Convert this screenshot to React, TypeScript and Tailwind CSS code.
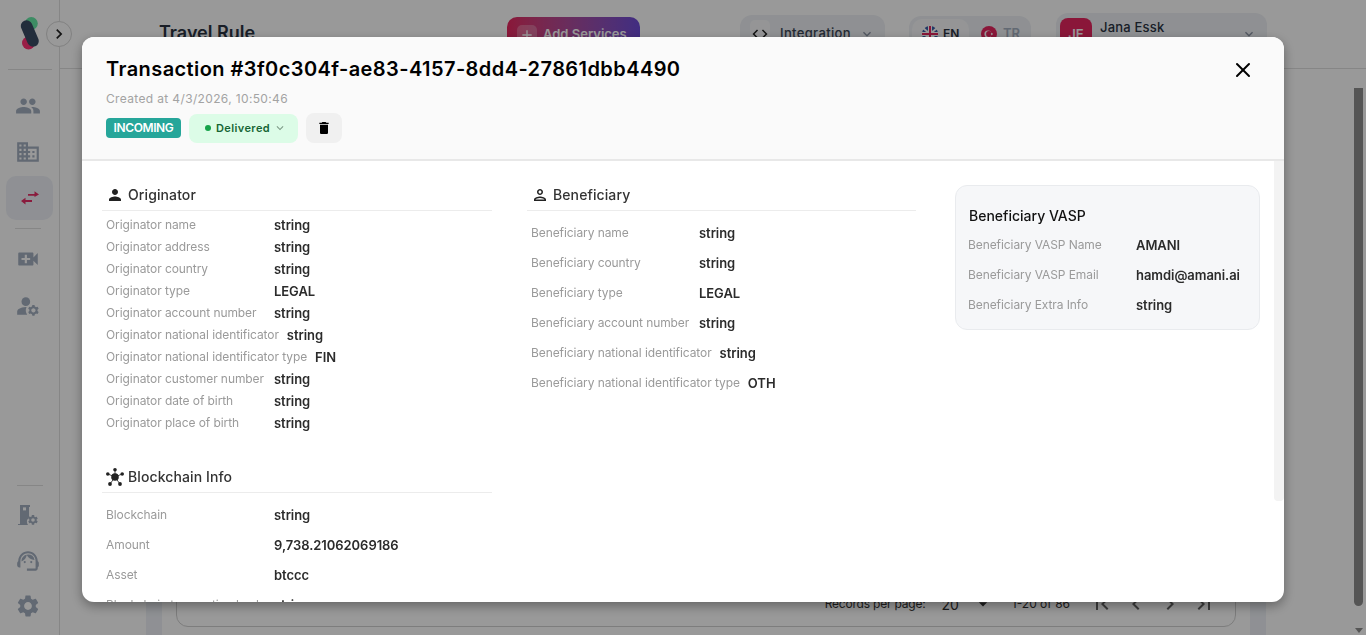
import { MdPeople, MdBusiness, MdVideoCall, MdManageAccounts, MdSettings, MdDelete, MdPerson, MdOutlinePerson, MdSupportAgent, MdKeyboardArrowDown, MdChevronRight, MdChevronLeft, MdFirstPage, MdLastPage, MdArrowDropDown, MdAdd, MdCode } from "react-icons/md";
import { X } from "lucide-react";

const font = "font-['Inter','Liberation_Sans',sans-serif]";

function Row({ label, value, h = "h-[30px]" }: { label: string; value: string; h?: string }) {
  return (
    <div className={`flex items-center gap-2 ${h} pl-1`}>
      <span className="min-w-[160px] text-[12px] text-[#9a9a9a] tracking-[-0.08px] whitespace-nowrap">{label}</span>
      <span className="pt-[1px] text-[13px] font-semibold text-[#2b2b2b] tracking-[-0.05px] whitespace-nowrap">{value}</span>
    </div>
  );
}

function SectionHead({ icon, title }: { icon: React.ReactNode; title: string }) {
  return (
    <div className="flex items-center gap-1 h-[26px] pb-[5px] pl-1 border-b border-[#ececec]">
      <span className="w-[18px] flex justify-center">{icon}</span>
      <span className="text-[14px] font-medium text-[#333] tracking-[0.1px] leading-5">{title}</span>
    </div>
  );
}

function Hub() {
  return (
    <svg width="18" height="18" viewBox="0 0 18 18" fill="#222">
      <g stroke="#222" strokeWidth="0.8">
        <line x1="9" y1="9" x2="9" y2="2" />
        <line x1="9" y1="9" x2="2" y2="6" />
        <line x1="9" y1="9" x2="16" y2="6" />
        <line x1="9" y1="9" x2="4" y2="16" />
        <line x1="9" y1="9" x2="14" y2="16" />
      </g>
      <circle cx="9" cy="9" r="3.8" />
      <circle cx="9" cy="1.8" r="1.8" />
      <circle cx="1.8" cy="6" r="1.8" />
      <circle cx="16.2" cy="6" r="1.8" />
      <circle cx="4" cy="16" r="1.9" />
      <circle cx="14" cy="16" r="1.9" />
    </svg>
  );
}

function Sidebar() {
  const ic = "text-[#a3afc0]";
  return (
    <aside className="relative w-[60px] shrink-0 h-full border-r border-[#e0e0e0] flex flex-col items-start">
      <svg className="ml-[20px] mt-[16px]" width="20" height="34" viewBox="0 0 20 34">
        <circle cx="11.3" cy="7.5" r="6.5" fill="#67e9a7" />
        <circle cx="8.5" cy="27" r="6.5" fill="#ff3275" />
        <line x1="6.6" y1="10" x2="13" y2="25" stroke="#3a4b64" strokeWidth="11.5" strokeLinecap="round" />
      </svg>
      <div className="absolute left-[46px] top-[21px] w-[26px] h-[26px] rounded-full border border-[#d8d8d8] bg-white flex items-center justify-center text-[#222]">
        <MdChevronRight size={20} />
      </div>
      <div className="w-[44px] ml-[8px] mt-[19px] border-t border-[#e0e0e0]" />
      <div className="mt-[23px] w-full flex justify-center pr-[4px]"><MdPeople size={26} className={ic} /></div>
      <div className="mt-[20px] w-full flex justify-center pr-[4px]"><MdBusiness size={26} className={ic} /></div>
      <div className="mt-[11px] ml-[6px] w-[47px] h-[44px] rounded-[10px] bg-[#eef1f7] flex items-center justify-center">
        <svg width="18" height="14" viewBox="0 0 18 14" fill="#e62e66">
          <polygon points="7,3 13.5,3 13.5,0.2 18,3.6 13.5,6 13.5,4.8 7,4.8" />
          <polygon points="11,9 4.5,9 4.5,6.8 0,10 4.5,13.4 4.5,10.9 11,10.9" />
        </svg>
      </div>
      <div className="w-[26px] ml-[15px] mt-[8px] border-t border-[#e0e0e0]" />
      <div className="mt-[17px] w-full flex justify-center pr-[4px]"><MdVideoCall size={26} className={ic} /></div>
      <div className="mt-[21px] w-full flex justify-center pr-[4px]"><MdManageAccounts size={26} className={ic} /></div>
      <div className="flex-1" />
      <div className="w-[26px] ml-[17px] mb-[18px] border-t border-[#e0e0e0]" />
      <div className="w-full flex justify-center pr-[4px]">
        <svg width="22" height="22" viewBox="0 0 22 22" fill="#a3afc0">
          <path d="M3 1h10v2h-1v3H3z M3 6h9v7.5a6 6 0 0 0-1 7.5H1v-1h2z" />
          <rect x="6" y="3.4" width="3" height="3" fill="#fff" />
          <svg x="10" y="10" width="12" height="12" viewBox="0 0 24 24"><path d="M19.14 12.94c.04-.3.06-.61.06-.94s-.02-.64-.07-.94l2.03-1.58a.49.49 0 0 0 .12-.61l-1.92-3.32a.49.49 0 0 0-.59-.22l-2.39.96a7 7 0 0 0-1.62-.94l-.36-2.54A.48.48 0 0 0 13.92 2h-3.84c-.24 0-.43.17-.47.41l-.36 2.54c-.59.24-1.13.57-1.62.94l-2.39-.96a.49.49 0 0 0-.59.22L2.73 8.87a.48.48 0 0 0 .12.61l2.03 1.58c-.05.3-.09.63-.09.94s.02.64.07.94l-2.03 1.58a.49.49 0 0 0-.12.61l1.92 3.32c.12.22.37.29.59.22l2.39-.96c.5.38 1.03.7 1.62.94l.36 2.54c.05.24.24.41.48.41h3.84c.24 0 .44-.17.47-.41l.36-2.54c.59-.24 1.13-.56 1.62-.94l2.39.96c.22.08.47 0 .59-.22l1.92-3.32a.48.48 0 0 0-.12-.61zM12 15.6A3.6 3.6 0 1 1 12 8.4a3.6 3.6 0 0 1 0 7.2z" /></svg>
        </svg>
      </div>
      <div className="mt-[22px] w-full flex justify-center pr-[4px]"><MdSupportAgent size={26} className={ic} /></div>
      <div className="mt-[19px] mb-[16px] w-full flex justify-center pr-[4px]"><MdSettings size={26} className={ic} /></div>
    </aside>
  );
}

function Topbar() {
  return (
    <header className="h-[69px] shrink-0 border-b border-[#e0e0e0] relative flex items-start">
      <h1 className="ml-[99px] mt-[21px] text-[18px] font-semibold leading-6 text-[#2a3342] whitespace-nowrap w-[348px]">Travel Rule</h1>
      <div className="mt-[17px] w-[133px] h-[36px] rounded-[10px] bg-gradient-to-r from-[#e6265f] to-[#6d4bd8] flex items-center pl-[10px] gap-[6px]">
        <span className="w-[20px] h-[20px] rounded-[5px] bg-white/25 flex items-center justify-center text-white"><MdAdd size={16} /></span>
        <span className="text-[13px] font-semibold text-white whitespace-nowrap">Add Services</span>
      </div>
      <div className="ml-[100px] mt-[15px] w-[145px] h-[38px] rounded-[12px] bg-[#eef1f5] flex items-center pl-[10px] gap-[10px]">
        <span className="w-[20px] h-[28px] rounded-[5px] bg-[#f8f9fb] flex items-center justify-center text-[#222]"><MdCode size={18} /></span>
        <span className="text-[13px] font-medium text-[#3a4656] tracking-[0.35px] w-[69px] whitespace-nowrap">Integration</span>
        <MdKeyboardArrowDown size={16} className="text-[#8a94a3]" />
      </div>
      <div className="ml-[24px] mt-[16px] w-[122px] h-[36px] rounded-[12px] bg-[#eef1f5] flex items-center pl-[3px]">
        <div className="w-[57px] h-[30px] rounded-[10px] bg-[#f8f9fb] flex items-center pl-[10px] gap-[5px]">
          <svg width="16" height="16" viewBox="0 0 16 16"><circle cx="8" cy="8" r="8" fill="#3a5fa8" /><path d="M1 2l14 12M15 2L1 14" stroke="#fff" strokeWidth="2" /><path d="M8 0v16M0 8h16" stroke="#fff" strokeWidth="4" /><path d="M8 0v16M0 8h16" stroke="#e6265f" strokeWidth="2" /></svg>
          <span className="text-[12px] font-semibold text-[#2a3342]">EN</span>
        </div>
        <div className="ml-[12px] flex items-center gap-[6px]">
          <svg width="16" height="16" viewBox="0 0 16 16"><circle cx="8" cy="8" r="8" fill="#e6265f" /><circle cx="7" cy="8" r="3.6" fill="#fff" /><circle cx="8" cy="8" r="2.9" fill="#e6265f" /><circle cx="10.8" cy="8" r="1" fill="#fff" /></svg>
          <span className="text-[13px] font-semibold text-[#a3afc0]">TR</span>
        </div>
      </div>
      <div className="ml-[25px] mt-[13px] w-[211px] h-[44px] rounded-[12px] bg-[#eef1f5] flex items-start pl-[4px] pt-[5px] relative">
        <span className="w-[32px] h-[34px] rounded-[8px] bg-[#e6265f] text-white text-[13px] font-semibold flex items-center justify-center">JE</span>
        <span className="ml-[8px] text-[13px] font-medium text-[#2a3342] tracking-[0.2px] leading-[18px]">Jana Essk</span>
        <MdKeyboardArrowDown size={16} className="absolute right-[10px] top-[13px] text-[#8a94a3]" />
      </div>
    </header>
  );
}

function Backdrop() {
  return (
    <div className="h-[635px] flex bg-white overflow-hidden">
      <Sidebar />
      <div className="flex-1 flex flex-col min-w-0">
        <Topbar />
        <main className="flex-1 pl-[86px] pr-[100px] overflow-hidden">
          <div className="h-[600px] bg-[#eef1f7] px-4 pt-[16px]">
            <div className="h-[600px] bg-white rounded-[16px] px-[14px] pt-[10px]">
              <div className="h-[532px] rounded-[12px] border border-[#d0d0d0] flex items-end justify-end pb-[12px] pr-[19px]">
                <div className="flex items-center text-[#333] h-[20px]">
                  <span className="text-[12px] tracking-[-0.2px] mr-[16px] whitespace-nowrap">Records per page:</span>
                  <span className="text-[14px]">20</span>
                  <MdArrowDropDown size={20} className="ml-[14px] mr-[19px]" />
                  <span className="text-[12px] mr-[20px] whitespace-nowrap">1-20 of 86</span>
                  <div className="flex gap-[10px] text-[#666]">
                    <MdFirstPage size={24} /><MdChevronLeft size={24} /><MdChevronRight size={24} /><MdLastPage size={24} />
                  </div>
                </div>
              </div>
            </div>
          </div>
        </main>
      </div>
    </div>
  );
}

function Modal() {
  return (
    <div className="fixed inset-0 bg-black/40 flex justify-center items-start pt-[37px]">
      <div className="relative w-[1202px] h-[565px] rounded-[12px] bg-white shadow-[0_4px_12px_rgba(0,0,0,0.35)] overflow-hidden flex flex-col">
        <div className="h-[124px] shrink-0 bg-[#fafafa] border-b-2 border-[#e8e8e8] pl-6 pt-[18px] relative">
          <div className="text-[20px] leading-7 font-semibold text-black tracking-[0.42px] whitespace-nowrap">Transaction #3f0c304f-ae83-4157-8dd4-27861dbb4490</div>
          <div className="mt-[8px] text-[12px] leading-4 tracking-[0.35px] text-[#a3a3a3]">Created at 4/3/2026, 10:50:46</div>
          <div className="mt-[6px] flex items-center">
            <span className="w-[75px] h-[20px] rounded-[4px] bg-[#26a69a] text-white text-[12px] font-semibold tracking-[-0.4px] flex items-center justify-center">INCOMING</span>
            <div className="ml-2 w-[109px] h-[29px] rounded-[8px] bg-[#dcfce7] flex items-center pl-[16px]">
              <span className="w-[6px] h-[6px] rounded-full bg-[#16a34a]" />
              <span className="ml-[5px] text-[11px] font-semibold tracking-[0.4px] text-[#166534]">Delivered</span>
              <MdKeyboardArrowDown size={14} className="ml-[3px] text-[#7f9c88]" />
            </div>
            <div className="ml-2 w-[36px] h-[30px] rounded-[8px] bg-[#f0f0f0] flex items-center justify-center text-black"><MdDelete size={16} /></div>
          </div>
          <button className="absolute right-[29px] top-[21px] text-black"><X size={24} strokeWidth={2} /></button>
        </div>
        <div className="flex-1 overflow-hidden relative pl-5 pt-6">
          <div className="grid grid-cols-[390px_393px_305px] gap-x-[35px] items-start">
            <div>
              <SectionHead icon={<MdPerson size={18} className="text-[#222]" />} title="Originator" />
              <div className="mt-[3px]">
                <Row h="h-[22px]" label="Originator name" value="string" />
                <Row h="h-[22px]" label="Originator address" value="string" />
                <Row h="h-[22px]" label="Originator country" value="string" />
                <Row h="h-[22px]" label="Originator type" value="LEGAL" />
                <Row h="h-[22px]" label="Originator account number" value="string" />
                <Row h="h-[22px]" label="Originator national identificator" value="string" />
                <Row h="h-[22px]" label="Originator national identificator type" value="FIN" />
                <Row h="h-[22px]" label="Originator customer number" value="string" />
                <Row h="h-[22px]" label="Originator date of birth" value="string" />
                <Row h="h-[22px]" label="Originator place of birth" value="string" />
              </div>
              <div className="mt-[33px]">
                <SectionHead icon={<Hub />} title="Blockchain Info" />
              </div>
              <div className="mt-[7px]">
                <Row label="Blockchain" value="string" />
                <Row label="Amount" value="9,738.21062069186" />
                <Row label="Asset" value="btccc" />
                <Row label="Blockchain transaction hash" value="string" />
              </div>
            </div>
            <div className="w-[389px]">
              <SectionHead icon={<MdOutlinePerson size={18} className="text-[#222]" />} title="Beneficiary" />
              <div className="mt-[7px]">
                <Row label="Beneficiary name" value="string" />
                <Row label="Beneficiary country" value="string" />
                <Row label="Beneficiary type" value="LEGAL" />
                <Row label="Beneficiary account number" value="string" />
                <Row label="Beneficiary national identificator" value="string" />
                <Row label="Beneficiary national identificator type" value="OTH" />
              </div>
            </div>
            <div className="rounded-[12px] border border-[#e9ebee] bg-[#f6f7f9] pl-[8px] pt-[20px] pb-[9px]">
              <div className="pl-[5px] text-[14px] leading-5 font-medium text-[#111]">Beneficiary VASP</div>
              <div className="mt-[4px]">
                <Row label="Beneficiary VASP Name" value="AMANI" />
                <Row label="Beneficiary VASP Email" value="hamdi@amani.ai" />
                <Row label="Beneficiary Extra Info" value="string" />
              </div>
            </div>
          </div>
          <div className="absolute top-0 right-0 w-[10px] h-[340px] rounded-b-[4px] bg-[#f3f3f3]" />
        </div>
      </div>
      <div className="absolute right-[3px] top-[88px] w-[9px] h-[518px] rounded-b-[5px] bg-[#555]" />
      <div className="absolute right-[3px] top-[628px] w-0 h-0 border-l-[4.5px] border-r-[4.5px] border-t-[5px] border-l-transparent border-r-transparent border-t-[#555]" />
    </div>
  );
}

export default function App() {
  return (
    <div className={`${font} relative h-[635px] overflow-hidden`}>
      <Backdrop />
      <Modal />
    </div>
  );
}
